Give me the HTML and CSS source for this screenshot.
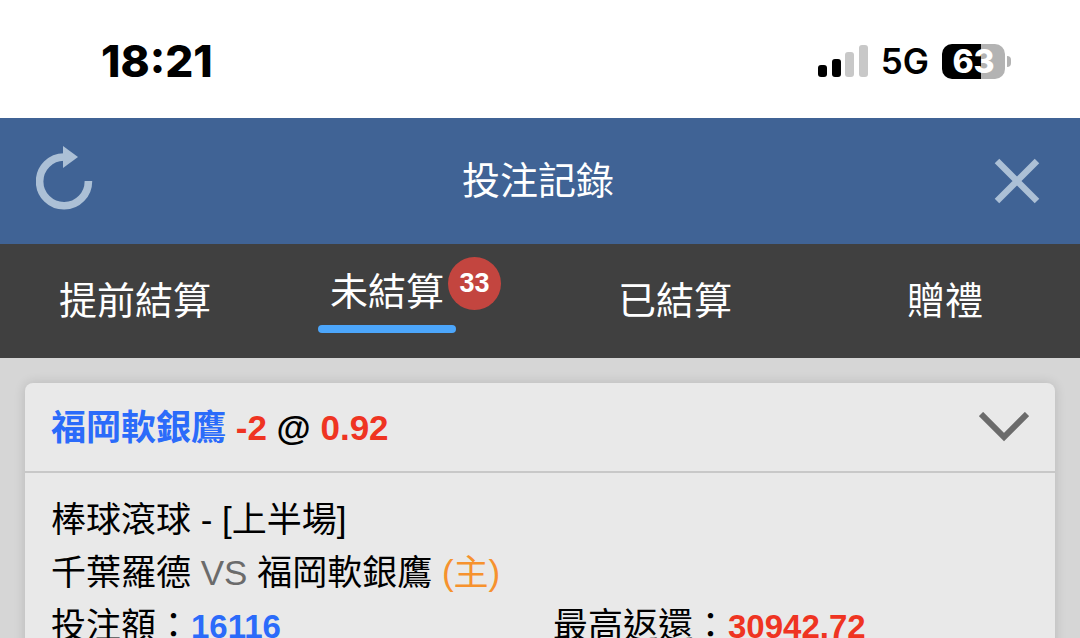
FILE: index.html
```html
<!DOCTYPE html>
<html lang="zh-Hant">
<head>
  <meta charset="UTF-8">
  <meta name="viewport" content="width=device-width, initial-scale=1">
  <title>投注記錄</title>
  <link rel="stylesheet" href="styles.css">
</head>
<body>
  <div class="status-bar">
    <time class="clock">18:21</time>
    <div class="status-icons">
      <svg class="signal" width="50" height="32" viewBox="0 0 50 32" aria-hidden="true">
        <rect x="0" y="20" width="9" height="12" rx="3"/>
        <rect x="14" y="14" width="9" height="18" rx="3"/>
        <rect class="off" x="27" y="7" width="9" height="25" rx="3"/>
        <rect class="off" x="41" y="0" width="9" height="32" rx="3"/>
      </svg>
      <span class="network">5G</span>
      <div class="battery"><span>63</span></div>
    </div>
  </div>

  <header class="title-bar">
    <button class="icon-btn" type="button" aria-label="重新整理">
      <svg width="58" height="70" viewBox="0 0 58 70">
        <path d="M28 11 A24.4 24.4 0 1 0 52.4 35" fill="none" stroke="currentColor" stroke-width="7.6"/>
        <path d="M27 0 L42 11 L27 22 Z" fill="currentColor"/>
      </svg>
    </button>
    <h1>投注記錄</h1>
    <button class="icon-btn close" type="button" aria-label="關閉">
      <svg width="46" height="46" viewBox="0 0 46 46">
        <path d="M3 3 L43 43 M43 3 L3 43" fill="none" stroke="currentColor" stroke-width="6.4"/>
      </svg>
    </button>
  </header>

  <nav class="tabs">
    <button class="tab" type="button">提前結算</button>
    <button class="tab active" type="button">
      <span class="tab-label">未結算<span class="badge">33</span></span>
    </button>
    <button class="tab" type="button">已結算</button>
    <button class="tab" type="button">贈禮</button>
  </nav>

  <main>
    <article class="card">
      <div class="card-head">
        <h2><span class="blue">福岡軟銀鷹</span> <span class="red">-2</span> @ <span class="red">0.92</span></h2>
        <button class="toggle" type="button" aria-label="收合">
          <svg width="50" height="30" viewBox="0 0 50 30">
            <path d="M2 2 L25 25 L48 2" fill="none" stroke="currentColor" stroke-width="6"/>
          </svg>
        </button>
      </div>
      <div class="card-body">
        <p>棒球滾球 - [上半場]</p>
        <p>千葉羅德 <span class="vs">VS</span> 福岡軟銀鷹 <span class="home">(主)</span></p>
        <div class="amounts">
          <p>投注額：<b class="blue">16116</b></p>
          <p>最高返還：<b class="red">30942.72</b></p>
        </div>
      </div>
    </article>
  </main>
</body>
</html>
```
FILE: styles.css
```css
* {
  box-sizing: border-box;
}

html {
  height: 100%;
}

body {
  margin: 0;
  height: 100%;
  overflow: hidden;
  background: #d6d6d6;
  color: #000;
  font-family: "Liberation Sans", "Noto Sans CJK TC", sans-serif;
  font-size: 35px;
  line-height: 53px;
}

h1, h2, p {
  margin: 0;
  font-weight: normal;
}

button {
  border: 0;
  padding: 0;
  background: none;
  color: inherit;
  font: inherit;
  cursor: pointer;
}

svg {
  display: block;
}

/* status bar */
.status-bar {
  display: flex;
  justify-content: space-between;
  align-items: center;
  height: 118px;
  padding: 4px 75px 0 101px;
  background: #fff;
  font-family: Inter, sans-serif;
}

.clock {
  font-size: 44px;
  font-weight: 800;
}

.status-icons {
  display: flex;
  align-items: center;
}

.signal .off {
  fill: #c8c8c8;
}

.network {
  margin: 0 13px;
  font-size: 35px;
  font-weight: 600;
}

.battery {
  position: relative;
  width: 63px;
  height: 35px;
  border-radius: 10px;
  background: linear-gradient(to right, #000 62%, #b3b3b3 62%);
  color: #fff;
  font-size: 32px;
  font-weight: 800;
  line-height: 35px;
  text-align: center;
}

.battery::after {
  content: "";
  position: absolute;
  top: 12px;
  right: -6px;
  width: 4px;
  height: 11px;
  border-radius: 0 6px 6px 0;
  background: #b3b3b3;
}

/* title */
.title-bar {
  display: grid;
  grid-template-columns: 1fr auto 1fr;
  align-items: center;
  height: 126px;
  padding: 0 40px 0 36px;
  background: #406395;
  color: #fff;
}

.title-bar h1 {
  font-size: 38px;
}

.icon-btn {
  justify-self: start;
  color: #acc0d6;
}

.icon-btn.close {
  justify-self: end;
}

/* tabs */
.tabs {
  display: grid;
  grid-template-columns: repeat(4, 1fr);
  height: 114px;
  background: #404040;
  color: #fff;
}

.tab {
  font-size: 38px;
  line-height: 46px;
}

.tab.active {
  padding-right: 36px;
}

.tab-label {
  display: inline-block;
  position: relative;
  padding: 0 12px 18px;
}

.tab-label::after {
  content: "";
  position: absolute;
  left: 0;
  right: 0;
  bottom: 0;
  height: 8px;
  border-radius: 4px;
  background: #4ca6fb;
}

.badge {
  position: absolute;
  top: -12px;
  right: -45px;
  width: 53px;
  height: 53px;
  border-radius: 50%;
  background: #c3453f;
  font-size: 27px;
  font-weight: bold;
  line-height: 53px;
  text-align: center;
}

/* bet card */
main {
  padding: 25px;
}

.card {
  border-radius: 8px;
  background: #e9e9e9;
  box-shadow: 0 0 12px rgba(0, 0, 0, 0.14);
}

.card-head {
  display: flex;
  justify-content: space-between;
  align-items: center;
  height: 90px;
  padding: 0 26px;
  border-bottom: 2px solid #c8c8c8;
}

.card-head h2 {
  font-size: 35px;
  font-weight: bold;
}

.toggle {
  color: #6b6b6b;
}

.card-body {
  padding: 20px 0 20px 26px;
}

.amounts {
  display: grid;
  grid-template-columns: 1fr 1fr;
}

.amounts b {
  font-size: 33px;
}

.blue {
  color: #2b6bfa;
}

.red {
  color: #ef3422;
}

.vs {
  color: #6b6b6b;
}

.home {
  color: #f6922e;
}
```
